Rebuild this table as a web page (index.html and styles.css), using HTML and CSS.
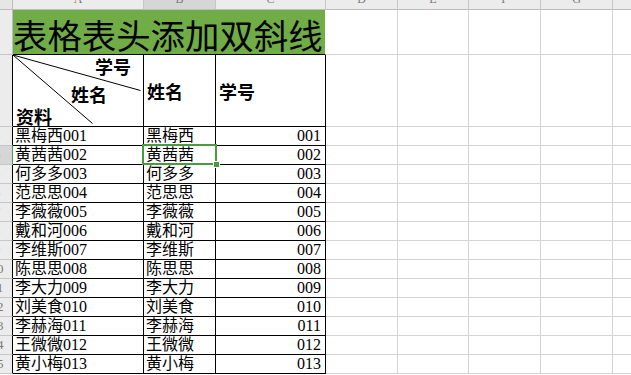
FILE: index.html
```html
<!DOCTYPE html>
<html lang="zh-CN">
<head>
<meta charset="utf-8">
<title>表格表头添加双斜线</title>
<link rel="stylesheet" href="styles.css">
</head>
<body>
<div class="sheet">
  <!-- column headers -->
  <div class="c corner"></div>
  <div class="c ch">A</div>
  <div class="c ch sel">B</div>
  <div class="c ch">C</div>
  <div class="c ch">D</div>
  <div class="c ch">E</div>
  <div class="c ch">F</div>
  <div class="c ch">G</div>
  <div class="c ch">H</div>

  <!-- row 1: title -->
  <div class="c rh">1</div>
  <div class="c title">表格表头添加双斜线</div>
  <div class="c"></div><div class="c"></div><div class="c"></div><div class="c"></div><div class="c"></div>

  <!-- row 2: header -->
  <div class="c rh rb">2</div>
  <div class="c t diag">
    <svg class="diag-lines" width="131" height="72" viewBox="0 0 131 72">
      <line x1="0" y1="0" x2="127.5" y2="35.5" stroke="#000" stroke-width="1"/>
      <line x1="0" y1="0" x2="79.5" y2="68.5" stroke="#000" stroke-width="1"/>
    </svg>
    <span class="lab lab-no">学号</span>
    <span class="lab lab-name">姓名</span>
    <span class="lab lab-data">资料</span>
  </div>
  <div class="c t hd">姓名</div>
  <div class="c t hd">学号</div>
  <div class="c"></div><div class="c"></div><div class="c"></div><div class="c"></div><div class="c"></div>

  <div class="c rh rb">3</div><div class="c t">黑梅西001</div><div class="c t">黑梅西</div><div class="c t num">001</div>
  <div class="c"></div><div class="c"></div><div class="c"></div><div class="c"></div><div class="c"></div>

  <div class="c rh rsel">4</div><div class="c t">黄茜茜002</div><div class="c t active">黄茜茜<span class="selbox"><span class="handle"></span></span></div><div class="c t num">002</div>
  <div class="c"></div><div class="c"></div><div class="c"></div><div class="c"></div><div class="c"></div>

  <div class="c rh rb">5</div><div class="c t">何多多003</div><div class="c t">何多多</div><div class="c t num">003</div>
  <div class="c"></div><div class="c"></div><div class="c"></div><div class="c"></div><div class="c"></div>

  <div class="c rh rb">6</div><div class="c t">范思思004</div><div class="c t">范思思</div><div class="c t num">004</div>
  <div class="c"></div><div class="c"></div><div class="c"></div><div class="c"></div><div class="c"></div>

  <div class="c rh rb">7</div><div class="c t">李薇薇005</div><div class="c t">李薇薇</div><div class="c t num">005</div>
  <div class="c"></div><div class="c"></div><div class="c"></div><div class="c"></div><div class="c"></div>

  <div class="c rh rb">8</div><div class="c t">戴和河006</div><div class="c t">戴和河</div><div class="c t num">006</div>
  <div class="c"></div><div class="c"></div><div class="c"></div><div class="c"></div><div class="c"></div>

  <div class="c rh rb">9</div><div class="c t">李维斯007</div><div class="c t">李维斯</div><div class="c t num">007</div>
  <div class="c"></div><div class="c"></div><div class="c"></div><div class="c"></div><div class="c"></div>

  <div class="c rh rb">10</div><div class="c t">陈思思008</div><div class="c t">陈思思</div><div class="c t num">008</div>
  <div class="c"></div><div class="c"></div><div class="c"></div><div class="c"></div><div class="c"></div>

  <div class="c rh rb">11</div><div class="c t">李大力009</div><div class="c t">李大力</div><div class="c t num">009</div>
  <div class="c"></div><div class="c"></div><div class="c"></div><div class="c"></div><div class="c"></div>

  <div class="c rh rb">12</div><div class="c t">刘美食010</div><div class="c t">刘美食</div><div class="c t num">010</div>
  <div class="c"></div><div class="c"></div><div class="c"></div><div class="c"></div><div class="c"></div>

  <div class="c rh rb">13</div><div class="c t">李赫海011</div><div class="c t">李赫海</div><div class="c t num">011</div>
  <div class="c"></div><div class="c"></div><div class="c"></div><div class="c"></div><div class="c"></div>

  <div class="c rh rb">14</div><div class="c t">王微微012</div><div class="c t">王微微</div><div class="c t num">012</div>
  <div class="c"></div><div class="c"></div><div class="c"></div><div class="c"></div><div class="c"></div>

  <div class="c rh rb">15</div><div class="c t">黄小梅013</div><div class="c t">黄小梅</div><div class="c t num">013</div>
  <div class="c"></div><div class="c"></div><div class="c"></div><div class="c"></div><div class="c"></div>
</div>
</body>
</html>
```

FILE: styles.css
```css
html, body {
  margin: 0;
  padding: 0;
  background: #fff;
  overflow: hidden;
}

.sheet {
  display: grid;
  grid-template-columns: 31px 131px 72px 110px 72px 71px 72px 72px 72px;
  grid-template-rows: 21px 45px 72px repeat(13, 19px);
  margin: -11px 0 0 -18px;
  width: 703px;
  font-family: "Liberation Serif", "Noto Sans CJK SC", serif;
  font-size: 16px;
  color: #000;
}

.c {
  box-sizing: border-box;
  border-right: 1px solid #d4d4d4;
  border-bottom: 1px solid #d4d4d4;
  min-width: 0;
  white-space: nowrap;
  overflow: visible;
  line-height: 18px;
  padding: 0 0 0 2px;
}

.corner {
  background: #e6e6e6;
  border-color: #bdbdbd;
}

.ch {
  background: #ececec;
  border-right-color: #c6c6c6;
  border-bottom-color: #bdbdbd;
  color: #7a7a7a;
  font-family: "Liberation Serif", serif;
  font-size: 12px;
  text-align: center;
  line-height: 20px;
  padding: 0;
}

.ch.sel {
  background: #d6d6d6;
}

.rh {
  background: #ececec;
  border-right-color: #bdbdbd;
  border-bottom-color: #c6c6c6;
  color: #7a7a7a;
  font-family: "Liberation Serif", serif;
  font-size: 13px;
  text-align: center;
  padding: 0;
  display: flex;
  align-items: center;
  justify-content: center;
}

.rh.rb {
  border-right-color: #000;
}

.rh.rsel {
  background: #d6d6d6;
  border-right: 1px solid #4a9b40;
}

.title {
  grid-column: span 3;
  background: #70ad47;
  border-right-color: #fff;
  border-bottom: 1px solid #000;
  font-family: "Noto Sans CJK SC", sans-serif;
  font-size: 34.4px;
  line-height: 1;
  padding: 7px 0 0 0;
}

.t {
  border-right-color: #000;
  border-bottom-color: #000;
}

.num {
  text-align: right;
  padding: 0 4px 0 0;
}

.hd {
  font-family: "Noto Sans CJK SC", sans-serif;
  font-weight: bold;
  font-size: 18px;
  line-height: 1;
  display: flex;
  align-items: center;
  padding: 0 0 0 3px;
}

.diag {
  position: relative;
  padding: 0;
}

.diag-lines {
  position: absolute;
  left: 0;
  top: 0;
}

.lab {
  position: absolute;
  font-family: "Noto Sans CJK SC", sans-serif;
  font-weight: bold;
  font-size: 18px;
  line-height: 1;
}

.lab-no { left: 82px; top: 2px; }
.lab-name { left: 58px; top: 30px; }
.lab-data { left: 3px; top: 52px; }

.active {
  position: relative;
}

.selbox {
  position: absolute;
  left: -2px;
  top: -2px;
  right: -2px;
  bottom: -1px;
  border: 2px solid #4a9b40;
  box-sizing: border-box;
  pointer-events: none;
}

.handle {
  position: absolute;
  right: -5px;
  bottom: -5px;
  width: 5px;
  height: 5px;
  background: #4a9b40;
  border: 1px solid #fff;
}
```
